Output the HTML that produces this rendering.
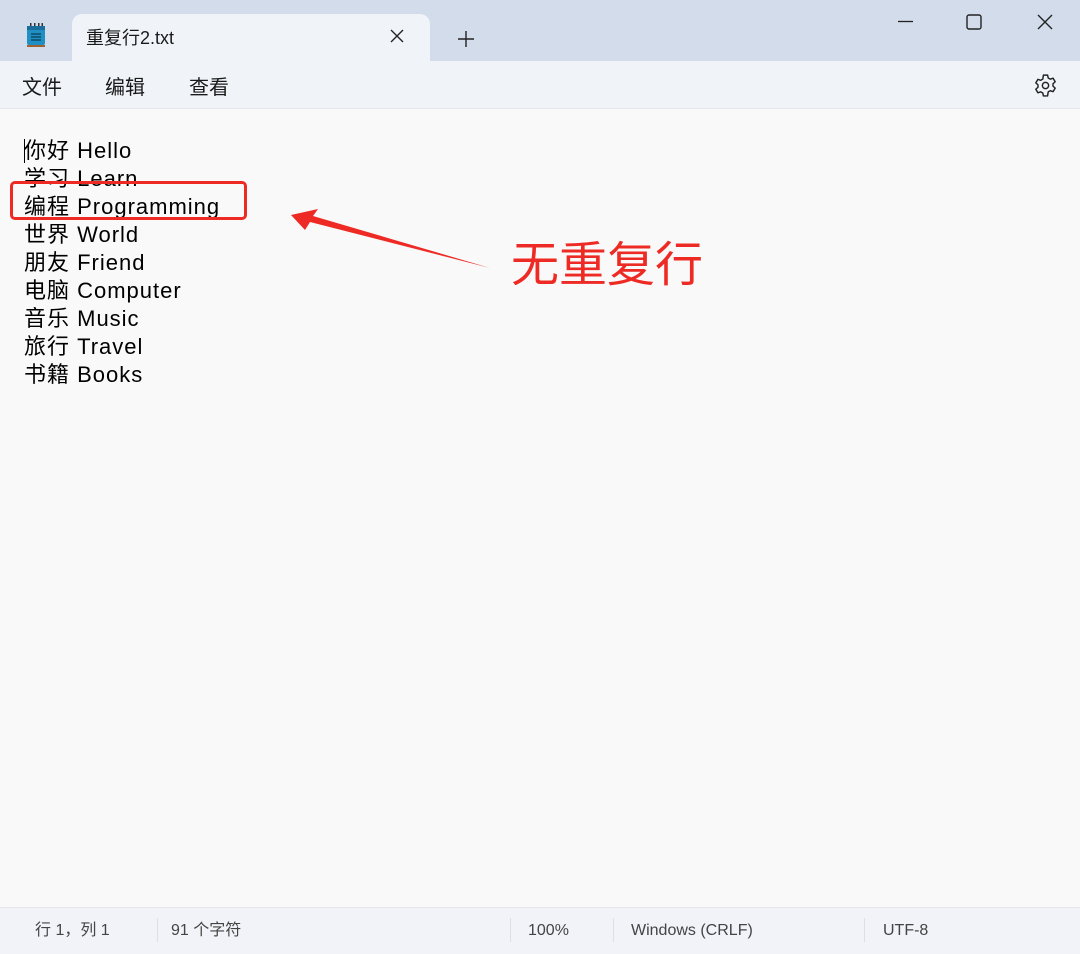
<!DOCTYPE html>
<html><head><meta charset="utf-8"><style>
*{margin:0;padding:0;box-sizing:border-box}
body{width:1080px;height:954px;overflow:hidden;background:#f9f9f9;font-family:"Liberation Sans","Noto Sans CJK SC",sans-serif;position:relative;color:#1a1a1a}
.title{position:absolute;left:0;top:0;width:1080px;height:61px;background:#d2dcea}
.tab{position:absolute;left:72px;top:14px;width:358px;height:48px;background:#f0f4f9;border-radius:10px 10px 0 0}
.menu{position:absolute;left:0;top:61px;width:1080px;height:48px;background:#f0f4f9;border-bottom:1px solid #e3e6ea}
.menu span{position:absolute;top:10px;font-size:20px;color:#1a1a1a}
.txt{position:absolute;left:24px;top:137px;font-size:22px;line-height:28px;color:#000;letter-spacing:1px}
.status{position:absolute;left:0;top:907px;width:1080px;height:47px;background:#f1f3f8;border-top:1px solid #e4e6ea;font-size:16px;color:#444}
.status span{position:absolute;top:11px;line-height:24px;height:24px}
.sep{position:absolute;top:10px;width:1px;height:24px;background:#dcdfe3}
</style></head><body>
<div class="title">
 <div class="tab"></div>
 <svg style="position:absolute;left:26px;top:23px" width="20" height="26" viewBox="0 0 20 26">
  <rect x="1" y="3" width="18" height="19" rx="2" fill="#1f8fc4"/>
  <rect x="1" y="3" width="18" height="4" fill="#1a6e9a"/>
  <g stroke="#0d4a6b" stroke-width="1.5"><line x1="5" y1="11" x2="15" y2="11"/><line x1="5" y1="14" x2="15" y2="14"/><line x1="5" y1="17" x2="15" y2="17"/></g>
  <g fill="#333"><rect x="4" y="0" width="1.5" height="3"/><rect x="8" y="0" width="1.5" height="3"/><rect x="12" y="0" width="1.5" height="3"/><rect x="15.5" y="0" width="1.5" height="3"/></g>
  <rect x="1" y="22" width="18" height="2" fill="#a0622f"/>
 </svg>
 <span style="position:absolute;left:86px;top:24px;font-size:18px;color:#1a1a1a">重复行2.txt</span>
 <svg style="position:absolute;left:390px;top:29px" width="14" height="14"><path d="M1 1L13 13M13 1L1 13" stroke="#222" stroke-width="1.4"/></svg>
 <svg style="position:absolute;left:458px;top:31px" width="16" height="16"><path d="M8 0V16M0 8H16" stroke="#222" stroke-width="1.4"/></svg>
 <svg style="position:absolute;left:898px;top:20px" width="16" height="4"><path d="M0 1.5H15" stroke="#222" stroke-width="1.3"/></svg>
 <svg style="position:absolute;left:966px;top:14px" width="16" height="16"><rect x="1" y="1" width="14" height="14" rx="2" fill="none" stroke="#222" stroke-width="1.4"/></svg>
 <svg style="position:absolute;left:1037px;top:14px" width="16" height="16"><path d="M1 1L15 15M15 1L1 15" stroke="#222" stroke-width="1.4"/></svg>
</div>
<div class="menu">
 <span style="left:22px">文件</span><span style="left:105px">编辑</span><span style="left:189px">查看</span>
 <svg style="position:absolute;left:1033px;top:12px" width="25" height="25" viewBox="0 0 24 24"><path d="M10 2h4l.6 2.8 2 1.1 2.7-.9 2 3.4-2.1 1.9v2.3l2.1 1.9-2 3.4-2.7-.9-2 1.1L14 22h-4l-.6-2.8-2-1.1-2.7.9-2-3.4 2.1-1.9v-2.3L2.7 9.5l2-3.4 2.7.9 2-1.1z" fill="none" stroke="#222" stroke-width="1.4" stroke-linejoin="round"/><circle cx="12" cy="12" r="3" fill="none" stroke="#222" stroke-width="1.4"/></svg>
</div>
<div style="position:absolute;left:24px;top:139px;width:1px;height:24px;background:#000"></div>
<div class="txt">你好 Hello<br>学习 Learn<br>编程 Programming<br>世界 World<br>朋友 Friend<br>电脑 Computer<br>音乐 Music<br>旅行 Travel<br>书籍 Books</div>
<div style="position:absolute;left:10px;top:181px;width:237px;height:39px;border:3.5px solid #ee2a24;border-radius:5px"></div>
<svg style="position:absolute;left:0;top:0" width="1080" height="954"><path d="M291 215L318 209L313 216L490 268L310 222L305 230Z" fill="#ee2a24"/></svg>
<div style="position:absolute;left:511px;top:236px;font-size:48px;color:#ee2a24;line-height:60px">无重复行</div>
<div class="status">
 <span style="left:35px">行 1，列 1</span><div class="sep" style="left:157px"></div>
 <span style="left:171px">91 个字符</span><div class="sep" style="left:510px"></div>
 <span style="left:528px">100%</span><div class="sep" style="left:613px"></div>
 <span style="left:631px">Windows (CRLF)</span><div class="sep" style="left:864px"></div>
 <span style="left:883px">UTF-8</span>
</div>
</body></html>
